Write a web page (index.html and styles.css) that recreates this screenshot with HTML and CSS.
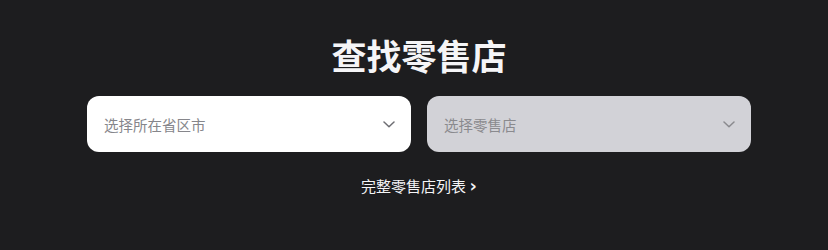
FILE: index.html
```html
<!DOCTYPE html>
<html lang="zh-CN">
  <head>
    <meta charset="UTF-8" />
    <meta name="viewport" content="width=device-width, initial-scale=1.0" />
    <title>查找零售店</title>
    <link rel="stylesheet" href="styles.css">
  </head>
  <body>
    <div class="finder">
      <h1>查找零售店</h1>

      <div class="selects">
        <div class="select">
          <span>选择所在省区市</span>
          <svg class="chevron" width="12" height="7" viewBox="0 0 12 7">
            <path d="M1 1 L6 5.8 L11 1" fill="none" stroke="#6e6e73" stroke-width="1.5" stroke-linecap="round" stroke-linejoin="round" />
          </svg>
        </div>
        <div class="select disabled">
          <span>选择零售店</span>
          <svg class="chevron" width="12" height="7" viewBox="0 0 12 7">
            <path d="M1 1 L6 5.8 L11 1" fill="none" stroke="#8a8a8e" stroke-width="1.5" stroke-linecap="round" stroke-linejoin="round" />
          </svg>
        </div>
      </div>

      <a class="store-list" href="#">完整零售店列表 <span class="arrow">›</span></a>
    </div>
  </body>
</html>
```

FILE: styles.css
```css
body {
  margin: 0;
  padding: 0;
  background-color: #1d1d1f;
  font-family: "Noto Sans CJK SC", "Noto Sans", sans-serif;
  height: 250px;
  overflow: hidden;
}

.finder {
  display: flex;
  flex-direction: column;
  align-items: center;
  padding: 30px 0 0 10px;
}

.finder h1 {
  margin: 0;
  font-size: 35px;
  line-height: 50px;
  font-weight: 700;
  color: #f5f5f7;
}

.selects {
  display: flex;
  gap: 16px;
  margin-top: 16px;
}

.select {
  width: 324px;
  height: 56px;
  box-sizing: border-box;
  display: flex;
  align-items: center;
  justify-content: space-between;
  padding: 0 16px 0 17px;
  background-color: #ffffff;
  border-radius: 12px;
  font-size: 14.5px;
  color: #86868b;
}

.select.disabled {
  background-color: #d2d2d7;
  color: #8a8a8e;
}

.store-list {
  margin-top: 23px;
  color: #f5f5f7;
  font-size: 15px;
  font-weight: 400;
  line-height: 22px;
  text-decoration: none;
}

.store-list .arrow {
  font-family: "DejaVu Sans", sans-serif;
  font-size: 18px;
  font-weight: 700;
}
```
